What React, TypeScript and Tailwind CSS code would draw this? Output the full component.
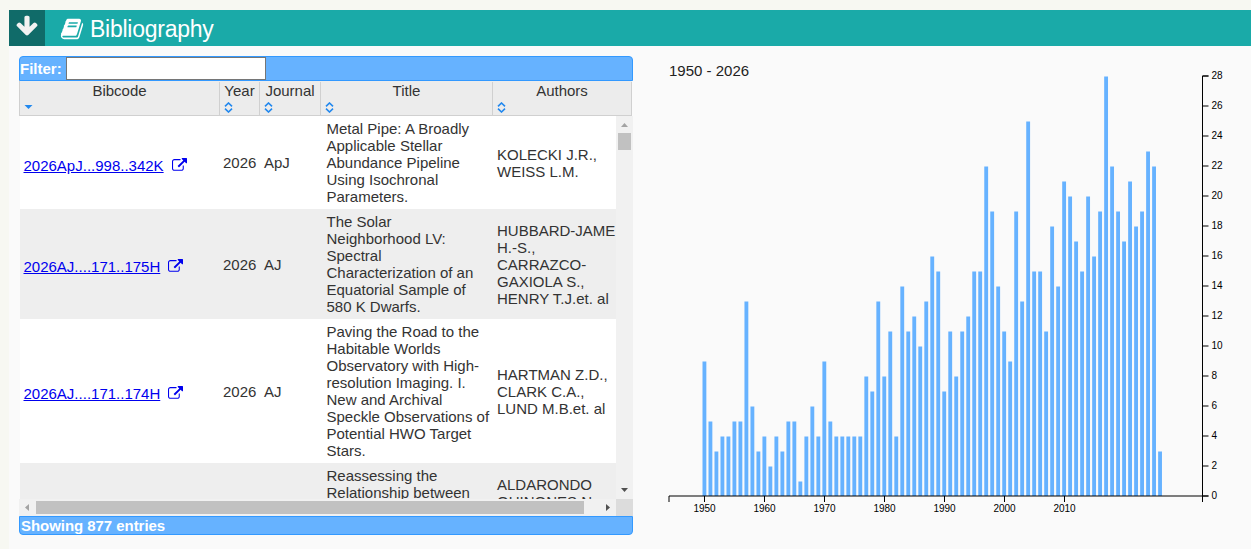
import React from "react";

type Entry = {
  bibcode: string;
  year: number;
  journal: string;
  title: string[];
  authors: string[];
};

const entries: Entry[] = [
  {
    bibcode: "2026ApJ...998..342K",
    year: 2026,
    journal: "ApJ",
    title: [
      "Metal Pipe: A Broadly",
      "Applicable Stellar",
      "Abundance Pipeline",
      "Using Isochronal",
      "Parameters.",
    ],
    authors: ["KOLECKI J.R.,", "WEISS L.M."],
  },
  {
    bibcode: "2026AJ....171..175H",
    year: 2026,
    journal: "AJ",
    title: [
      "The Solar",
      "Neighborhood LV:",
      "Spectral",
      "Characterization of an",
      "Equatorial Sample of",
      "580 K Dwarfs.",
    ],
    authors: [
      "HUBBARD-JAME",
      "H.-S.,",
      "CARRAZCO-",
      "GAXIOLA S.,",
      "HENRY T.J.et. al",
    ],
  },
  {
    bibcode: "2026AJ....171..174H",
    year: 2026,
    journal: "AJ",
    title: [
      "Paving the Road to the",
      "Habitable Worlds",
      "Observatory with High-",
      "resolution Imaging. I.",
      "New and Archival",
      "Speckle Observations of",
      "Potential HWO Target",
      "Stars.",
    ],
    authors: ["HARTMAN Z.D.,", "CLARK C.A.,", "LUND M.B.et. al"],
  },
];

// publications per year, starting in 1950
const FIRST_YEAR = 1950;
const counts = [
  9, 5, 3, 4, 4, 5, 5, 13, 6, 3, 4, 2, 4, 3, 5, 5, 1, 4, 6, 4, 9, 5, 4, 4, 4, 4,
  4, 8, 7, 13, 8, 11, 4, 14, 11, 12, 10, 13, 16, 15, 7, 11, 8, 11, 12, 15, 15,
  22, 19, 14, 11, 9, 19, 13, 25, 15, 15, 11, 18, 14, 21, 20, 17, 15, 20, 16, 19,
  28, 22, 19, 17, 21, 18, 19, 23, 22, 3,
];

const COLS = "grid grid-cols-[200px_40px_61px_172px_139px]";

const BookIcon = () => (
  <svg viewBox="0 0 1792 1792" width={24} height={24} fill="currentColor">
    <path d="M1703 478q40 57 18 129l-275 906q-19 64-76.5 107.5t-122.5 43.5h-923q-77 0-148.5-53.5t-99.5-131.5q-24-67-2-127 0-4 3-27t4-37q1-8-3-21.5t-3-19.5q2-11 8-21t16.5-23.5 16.5-23.5q23-38 45-91.5t30-91.5q3-10 .5-30t-.5-28q3-11 17-28t17-23q21-36 42-92t25-90q1-9-2.5-32t.5-28q4-13 22-30.5t22-22.5q19-26 42.5-84.5t27.5-96.5q1-8-3-25.5t-2-26.5q2-8 9-18t18-23 17-21q8-12 16.5-30.5t15-35 16-36 19.5-32 26.5-23.5 36-11.5 47.5 5.5l-1 3q38-9 51-9h761q74 0 114 56t18 130l-274 906q-36 119-71.5 153.5t-128.5 34.5h-869q-27 0-38 15-11 16-1 43 24 70 144 70h923q29 0 56-15.5t35-41.5l300-987q7-22 5-57 38 15 59 43zm-1064 2q-4 13 2 22.5t20 9.5h608q13 0 25.5-9.5t16.5-22.5l21-64q4-13-2-22.5t-20-9.5h-608q-13 0-25.5 9.5t-16.5 22.5zm-83 256q-4 13 2 22.5t20 9.5h608q13 0 25.5-9.5t16.5-22.5l21-64q4-13-2-22.5t-20-9.5h-608q-13 0-25.5 9.5t-16.5 22.5z" />
  </svg>
);

const ArrowDownIcon = () => (
  <svg viewBox="0 0 1792 1792" width={24} height={24} fill="currentColor">
    <path d="M1675 832q0 53-37 90l-651 652q-39 37-91 37-53 0-90-37l-651-652q-38-36-38-90 0-53 38-91l74-75q39-37 91-37 53 0 90 37l294 294v-704q0-52 38-90t90-38h128q52 0 90 38t38 90v704l294-294q37-37 90-37 52 0 91 37l75 75q37 39 37 91z" />
  </svg>
);

const ExternalIcon = () => (
  <svg viewBox="0 0 1792 1792" width={15} height={15} fill="currentColor">
    <path d="M1408 928v320q0 119-84.5 203.5t-203.5 84.5h-832q-119 0-203.5-84.5t-84.5-203.5v-832q0-119 84.5-203.5t203.5-84.5h704q14 0 23 9t9 23v64q0 14-9 23t-23 9h-704q-66 0-113 47t-47 113v832q0 66 47 113t113 47h832q66 0 113-47t47-113v-320q0-14 9-23t23-9h64q14 0 23 9t9 23zm384-864v512q0 26-19 45t-45 19-45-19l-176-176-652 652q-10 10-23 10t-23-10l-114-114q-10-10-10-23t10-23l652-652-176-176q-19-19-19-45t19-45 45-19h512q26 0 45 19t19 45z" />
  </svg>
);

const SortIcon = ({ sorted }: { sorted?: boolean }) => (
  <svg
    width={9}
    height={11}
    viewBox="0 0 9 11"
    fill="none"
    stroke="#2288ee"
    strokeWidth={1.6}
  >
    {sorted ? (
      <path d="M0.5 3h8L4.5 7z" fill="#2288ee" stroke="none" />
    ) : (
      <path d="M1 4.3 4.5 1 8 4.3M1 6.7l3.5 3.3L8 6.7" />
    )}
  </svg>
);

const HeaderCell = ({ label, sorted }: { label: string; sorted?: boolean }) => (
  <div className="flex flex-col border-r border-[#d0d0d0]">
    <span className="text-center h-[17px]">{label}</span>
    <span className="pl-[4px] pt-[3px]">
      <SortIcon sorted={sorted} />
    </span>
  </div>
);

const Lines = ({ items }: { items: string[] }) => (
  <div>
    {items.map((line) => (
      <div key={line}>{line}</div>
    ))}
  </div>
);

function BibTable() {
  return (
    <div className="w-[614px] text-[15px] leading-[17px] text-[#333]">
      <div className="flex items-center h-[25px] rounded-t-[4px] border border-[#3399ff] bg-[#66b2ff]">
        <label htmlFor="filter" className="font-bold text-white w-[46px]">
          Filter:
        </label>
        <input
          id="filter"
          className="w-[200px] h-[23px] bg-white border border-[#767676] px-1 outline-none"
        />
      </div>

      <div
        className={`${COLS} w-[613px] h-[35px] pt-px bg-[#ececec] border-l border-b border-[#d0d0d0]`}
      >
        <HeaderCell label="Bibcode" sorted />
        <HeaderCell label="Year" />
        <HeaderCell label="Journal" />
        <HeaderCell label="Title" />
        <HeaderCell label="Authors" />
      </div>

      <div className="flex h-[383px] overflow-hidden">
        <div className="w-[597px] pl-px overflow-hidden">
          {entries.map((e) => (
            <div
              key={e.bibcode}
              className={`${COLS} items-center py-1 whitespace-nowrap odd:bg-white even:bg-[#eeeeee]`}
            >
              <a
                href="#"
                className="flex items-center gap-2 pl-[3.5px] pt-[5px] text-[#0000ee]"
              >
                <span className="underline">{e.bibcode}</span>
                <ExternalIcon />
              </a>
              <div className="pl-[3px]">{e.year}</div>
              <div className="pl-[4px]">{e.journal}</div>
              <div className="pl-[5.5px]">
                <Lines items={e.title} />
              </div>
              <div className="pl-[4px] w-[123px]">
                <Lines items={e.authors} />
              </div>
            </div>
          ))}
          {/* last row only peeks in above the scrollbar */}
          <div className={`${COLS} h-[36px] pt-1 whitespace-nowrap bg-[#eeeeee]`}>
            <div className="col-start-4 pl-[5.5px]">
              <Lines items={["Reassessing the", "Relationship between"]} />
            </div>
            <div className="pl-[4px] pt-[9px]">
              <Lines items={["ALDARONDO", "QUINONES N.,"]} />
            </div>
          </div>
        </div>
        <div className="w-[17px] bg-[#f1f1f1] flex flex-col items-center">
          <svg width={17} height={17}>
            <path d="M5 11h7L8.5 7z" fill="#a3a3a3" />
          </svg>
          <div className="w-[13px] h-[17px] bg-[#c1c1c1]" />
          <svg width={17} height={17} className="mt-auto">
            <path d="M5 6h7L8.5 10z" fill="#505050" />
          </svg>
        </div>
      </div>

      <div className="flex items-center h-[17px] bg-[#f1f1f1]">
        <svg width={17} height={17}>
          <path d="M10 5v7L6 8.5z" fill="#a3a3a3" />
        </svg>
        <div className="w-[548px] h-[13px] bg-[#c1c1c1]" />
        <svg width={17} height={17} className="ml-auto">
          <path d="M7 5v7l4-3.5z" fill="#505050" />
        </svg>
        <div className="w-[17px] h-[17px] bg-[#dcdcdc]" />
      </div>

      <div className="h-[19px] rounded-b-[4px] border border-[#3399ff] bg-[#66b2ff] font-bold text-white pl-px tracking-[-0.05px]">
        Showing 877 entries
      </div>
    </div>
  );
}

function YearChart() {
  const base = 440;
  const years = [1950, 1960, 1970, 1980, 1990, 2000, 2010];
  const ticks = Array.from({ length: 15 }, (_, i) => i * 2);

  return (
    <svg
      width={598}
      height={480}
      className="font-['Liberation_Sans',Arial,sans-serif]"
    >
      <text x={16} y={20} fontSize={15} fill="#222">
        1950 - 2026
      </text>
      {counts.map((n, i) => (
        <rect
          key={i}
          x={49.5 + i * 5.995}
          y={base - n * 15 + 0.5}
          width={3.85}
          height={n * 15 - 0.5}
          fill="#66b2ff"
        />
      ))}
      <g fill="none" stroke="#000">
        <path d={`M16 ${base + 6}V${base}H549.5V${base + 6}`} />
        <path d={`M555.5 ${base}H549.5V20H555.5`} />
        {years.map((y) => (
          <path key={y} d={`M${51.5 + (y - FIRST_YEAR) * 6} ${base}v6`} />
        ))}
        {ticks.map((t) => (
          <path key={t} d={`M549.5 ${base - t * 15}h6`} />
        ))}
      </g>
      <g fontSize={10} fill="#000">
        {years.map((y) => (
          <text
            key={y}
            x={51.5 + (y - FIRST_YEAR) * 6}
            y={base + 16}
            textAnchor="middle"
          >
            {y}
          </text>
        ))}
        {ticks.map((t) => (
          <text key={t} x={558.5} y={base - t * 15 + 3.2}>
            {t}
          </text>
        ))}
      </g>
    </svg>
  );
}

export default function App() {
  return (
    <div className="h-[549px] overflow-hidden bg-[#f7f8f2] pt-[10px] pl-[9px] font-['Liberation_Sans',Arial,sans-serif]">
      <div className="h-full bg-[#fafafa]">
        <div className="flex items-center h-9 bg-[#1aaaa8] text-white">
          <button className="flex justify-center w-9 h-9 pt-[4px] bg-[#106b69] text-[#f2f2f2]">
            <ArrowDownIcon />
          </button>
          <h2 className="flex items-center gap-[6px] pl-[15px] pt-[2px] text-[23px]">
            <BookIcon />
            <span className="tracking-[-0.25px]">Bibliography</span>
          </h2>
        </div>
        <div className="flex gap-5 pl-[10px] pt-[10px]">
          <BibTable />
          <YearChart />
        </div>
      </div>
    </div>
  );
}
